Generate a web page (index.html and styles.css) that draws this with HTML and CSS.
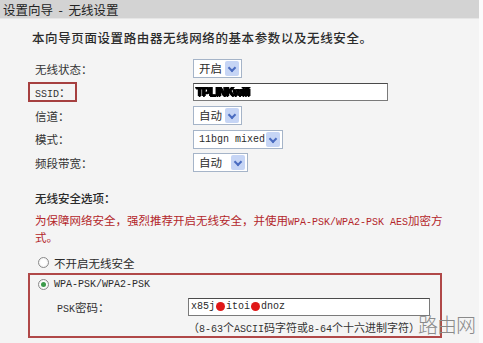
FILE: index.html
```html
<!DOCTYPE html>
<html lang="zh-CN">
<head>
  <meta charset="UTF-8">
  <title>设置向导 - 无线设置</title>
  <link rel="stylesheet" href="styles.css">
</head>
<body>
  <div class="title">设置向导 &nbsp;- &nbsp;无线设置</div>

  <div class="main">
    <p class="intro">本向导页面设置路由器无线网络的基本参数以及无线安全。</p>

    <div class="form-grid">
      <span class="label">无线状态：</span>
      <span class="select w49"><span class="val">开启</span><span class="arrow"></span></span>

      <span class="label ssid-box"><span class="latin">SSID</span>：</span>
      <span class="input ssid"><span class="smudge">TPLINKwifi</span></span>

      <span class="label">信道：</span>
      <span class="select w49"><span class="val">自动</span><span class="arrow"></span></span>

      <span class="label">模式：</span>
      <span class="select w90"><span class="val latin">11bgn mixed</span><span class="arrow"></span></span>

      <span class="label">频段带宽：</span>
      <span class="select w55"><span class="val">自动</span><span class="arrow"></span></span>
    </div>

    <div class="sec-title">无线安全选项：</div>
    <p class="warn"><span>为保障网络安全，强烈推荐开启无线安全，并使用</span><span class="latin">WPA-PSK/WPA2-PSK AES</span><span>加密方</span><br><span>式。</span></p>

    <div class="radio-row">
      <span class="radio"></span>
      <span>不开启无线安全</span>
    </div>

    <div class="sec-box">
      <div class="radio-row">
        <span class="radio checked"></span>
        <span class="latin">WPA-PSK/WPA2-PSK</span>
      </div>
      <div class="psk-row">
        <span class="label"><span class="latin">PSK</span>密码：</span>
        <span class="input psk"><span class="latin">x85j</span><span class="dot"></span><span class="latin">itoi</span><span class="dot"></span><span class="latin">dnoz</span></span>
      </div>
      <div class="hint">（<span class="latin">8-63</span>个<span class="latin">ASCII</span>码字符或<span class="latin">8-64</span>个十六进制字符）</div>
    </div>
  </div>

  <div class="watermark">路由网</div>
</body>
</html>
```

FILE: styles.css
```css
* {
  box-sizing: border-box;
  margin: 0;
  padding: 0;
}

body {
  font-family: "Noto Sans CJK SC", sans-serif;
  font-size: 11.5px;
  color: #2b2b2b;
  background-color: #f4f4f4;
  height: 343px;
  overflow: hidden;
  position: relative;
  border-right: 4px solid #fbfbfb;
}

.latin {
  font-family: "Liberation Mono", monospace;
  font-size: 10px;
}

.title {
  height: 19px;
  line-height: 19px;
  padding-left: 3px;
  font-size: 12.5px;
  background-color: #d3d3d3;
  border-bottom: 1px solid #e6e6e6;
  color: #222;
}

.main {
  padding-left: 35px;
}

.intro {
  margin-top: 11px;
  margin-left: -3px;
  line-height: 16px;
  font-size: 12.5px;
  letter-spacing: 0.6px;
  font-weight: 500;
}

.form-grid {
  display: grid;
  grid-template-columns: 158px 1fr;
  grid-auto-rows: 23.5px;
  align-items: center;
  margin-top: 11px;
}

.label {
  color: #333;
}

.ssid-box {
  margin-left: -7px;
  width: 49px;
  height: 20px;
  line-height: 16px;
  padding-left: 5px;
  border: 2px solid #a64040;
}

.select {
  display: flex;
  align-items: center;
  justify-content: space-between;
  height: 19px;
  padding: 1px 2px 1px 5px;
  background-color: #fff;
  border: 1px solid #a5b4c8;
}

.w49 { width: 49px; }
.w55 { width: 55px; }
.w90 { width: 90px; }

.val {
  line-height: 15px;
}

.arrow {
  position: relative;
  width: 14px;
  height: 15px;
  background-color: #c6d5f5;
  border-radius: 2px;
}

.arrow::after {
  content: "";
  position: absolute;
  left: 4px;
  top: 4px;
  width: 4px;
  height: 4px;
  border-right: 2px solid #4a6cc0;
  border-bottom: 2px solid #4a6cc0;
  transform: rotate(45deg);
}

.input {
  display: flex;
  align-items: center;
  height: 18px;
  padding-left: 2px;
  background-color: #fff;
  border: 1px solid #7a7a7a;
  border-top-color: #4a4a4a;
}

.ssid {
  width: 195px;
}

.smudge {
  font-family: "Liberation Sans", sans-serif;
  font-weight: bold;
  font-size: 12px;
  letter-spacing: -1px;
  color: #000;
  text-shadow: 1px 0 0 #000, 0 1px 0 #000, -1px 0 0 #000;
  filter: blur(0.7px);
}

.sec-title {
  margin-top: 15px;
  line-height: 17px;
  font-weight: 500;
}

.warn {
  margin-top: 5px;
  line-height: 17px;
  color: #b3262a;
}

.warn .latin {
  line-height: 12px;
}

.radio-row {
  display: flex;
  align-items: center;
  gap: 5px;
  height: 20px;
}

.main > .radio-row {
  margin-top: 7px;
  padding-left: 3px;
}

.radio {
  position: relative;
  width: 11px;
  height: 11px;
  border: 1px solid #8a8a8a;
  border-radius: 50%;
  background: radial-gradient(circle, #ffffff 40%, #e6e6e6 100%);
}

.radio.checked::after {
  content: "";
  position: absolute;
  left: 2px;
  top: 2px;
  width: 5px;
  height: 5px;
  border-radius: 50%;
  background-color: #3b9a4a;
}

.sec-box {
  margin-left: -7px;
  width: 414px;
  height: 65px;
  padding-left: 8px;
  border: 2px solid #b04848;
}

.psk-row {
  display: flex;
  align-items: center;
  height: 24px;
  padding-left: 19px;
}

.psk-row .label {
  width: 131px;
}

.psk {
  width: 242px;
  gap: 1px;
}

.dot {
  width: 9px;
  height: 9px;
  border-radius: 50%;
  background-color: #e01818;
  filter: blur(0.6px);
}

.hint {
  margin-left: 150px;
  line-height: 16px;
  font-size: 11px;
  color: #333;
}

.watermark {
  position: absolute;
  right: 4px;
  bottom: 4px;
  font-size: 20px;
  font-weight: 300;
  color: #8a8a8a;
  letter-spacing: -1px;
}
```
